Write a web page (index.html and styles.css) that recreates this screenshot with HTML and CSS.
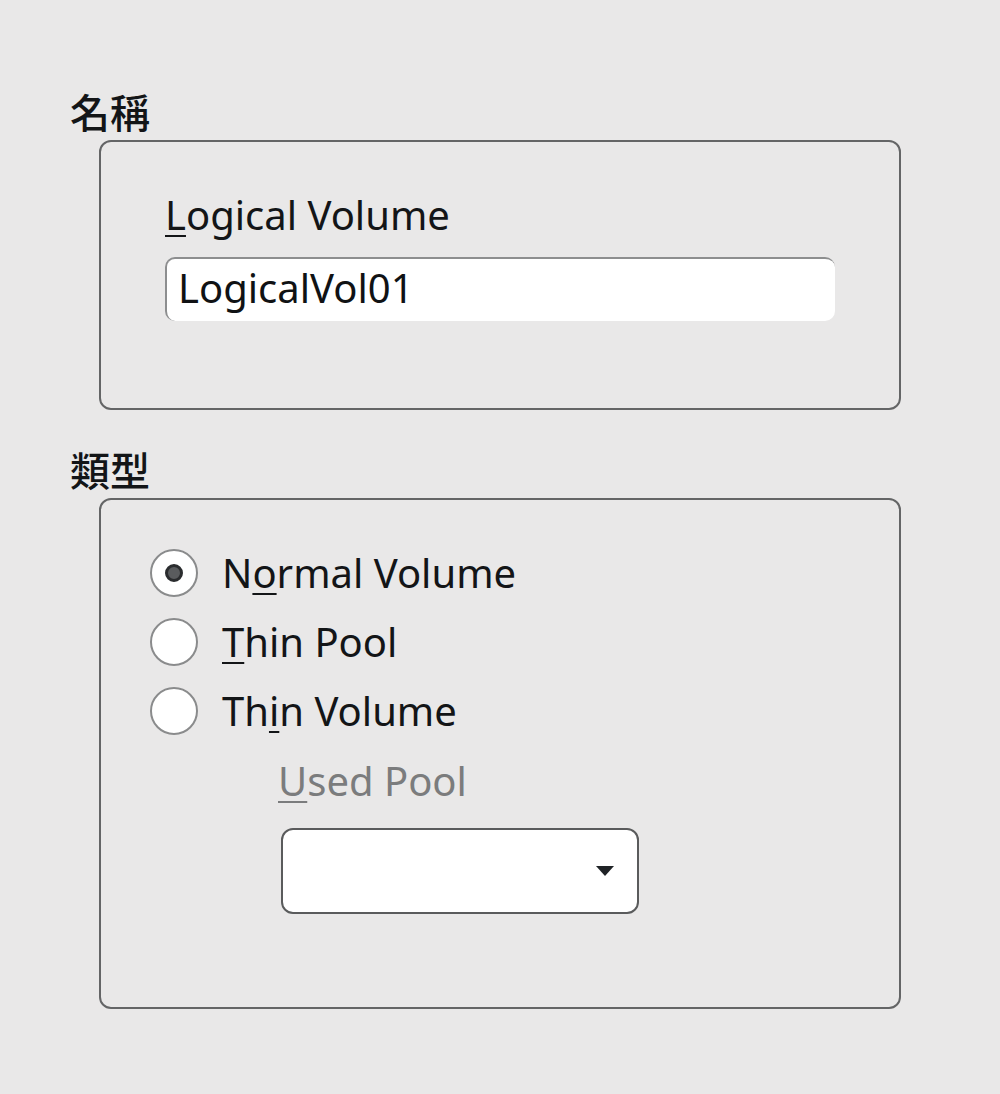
FILE: index.html
```html
<!DOCTYPE html>
<html>
<head>
    <meta charset="UTF-8">
    <title>Logical Volume</title>
    <link rel="stylesheet" href="styles.css">
</head>
<body>
    <div class="page">
        <div class="group-title">名稱</div>
        <div class="group name-group">
            <label class="field-label"><u>L</u>ogical Volume</label>
            <div class="text-input">LogicalVol01</div>
        </div>

        <div class="group-title">類型</div>
        <div class="group type-group">
            <div class="radio-row">
                <span class="radio checked"></span>
                <span>N<u>o</u>rmal Volume</span>
            </div>
            <div class="radio-row">
                <span class="radio"></span>
                <span><u>T</u>hin Pool</span>
            </div>
            <div class="radio-row">
                <span class="radio"></span>
                <span>Th<u>i</u>n Volume</span>
            </div>
            <div class="pool">
                <div class="pool-label"><u>U</u>sed Pool</div>
                <div class="combo">
                    <svg class="combo-arrow" width="20" height="12" viewBox="0 0 20 12"><path d="M1 1 H19 L10 11 Z" fill="#1f2326"/></svg>
                </div>
            </div>
        </div>
    </div>
</body>
</html>
```

FILE: styles.css
```css
body { margin: 0; background: #e9e8e8; font-family: "Noto Sans", "Noto Sans CJK TC", sans-serif; color: #131517; }
.page { padding: 86px 0 0 70px; width: 831px; }
u { text-decoration: underline; text-decoration-thickness: 2px; text-underline-offset: 5px; }

.group-title { font-family: "Noto Sans CJK TC", sans-serif; font-size: 40px; line-height: 50px; font-weight: 500; }
.group { margin: 4px 0 0 29px; border: 2px solid #646566; border-radius: 12px; box-sizing: border-box; width: 802px; }
.name-group { height: 270px; padding: 49px 64px 0 64px; margin-bottom: 34px; }
.type-group { height: 511px; padding: 38px 0 0 49px; }

.field-label { display: block; font-size: 40px; line-height: 48px; }
.text-input { margin-top: 18px; height: 64px; width: 670px; box-sizing: border-box; background: #fff; border-radius: 10px;
    border-top: 2px solid #8d8e8f; border-left: 2px solid #8d8e8f; padding-left: 11px; font-size: 40px; line-height: 58px; color: #101214; }

.radio-row { display: flex; align-items: center; gap: 24px; height: 69px; font-size: 40px; }
.radio { width: 48px; height: 48px; box-sizing: border-box; border: 2px solid #8a8b8c; border-radius: 50%; background: #fff;
    display: flex; align-items: center; justify-content: center; }
.radio.checked::after { content: ""; width: 18px; height: 18px; border-radius: 50%; background: #5a5c5e; border: 3px solid #2a2c2e; box-sizing: border-box; }

.pool { margin: 12px 0 0 128px; }
.pool-label { font-size: 40px; line-height: 48px; color: #7b7c7d; }
.combo { margin: 23px 0 0 3px; width: 358px; height: 86px; box-sizing: border-box; background: #fff; border: 2px solid #5a5b5c; border-radius: 12px;
    display: flex; align-items: center; justify-content: flex-end; padding-right: 22px; }
```
